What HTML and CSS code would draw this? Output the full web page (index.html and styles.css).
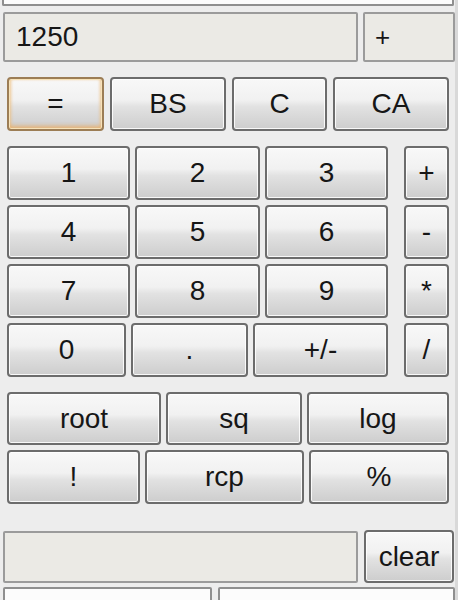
FILE: index.html
```html
<!DOCTYPE html>
<html lang="en">
<head>
<meta charset="utf-8">
<title>Calculator</title>
<link rel="stylesheet" href="styles.css">
</head>
<body>
<div class="window">
  <div class="field field-top"></div>

  <div class="display-row">
    <div class="display value">1250</div>
    <div class="display operator">+</div>
  </div>

  <div class="row ctrl">
    <button class="btn default">=</button>
    <button class="btn">BS</button>
    <button class="btn">C</button>
    <button class="btn">CA</button>
  </div>

  <div class="keypad">
    <div class="digits">
      <div class="row digit-row">
        <button class="btn">1</button>
        <button class="btn">2</button>
        <button class="btn">3</button>
      </div>
      <div class="row digit-row">
        <button class="btn">4</button>
        <button class="btn">5</button>
        <button class="btn">6</button>
      </div>
      <div class="row digit-row">
        <button class="btn">7</button>
        <button class="btn">8</button>
        <button class="btn">9</button>
      </div>
      <div class="row digit-row last">
        <button class="btn">0</button>
        <button class="btn">.</button>
        <button class="btn">+/-</button>
      </div>
    </div>
    <div class="ops">
      <button class="btn">+</button>
      <button class="btn">-</button>
      <button class="btn">*</button>
      <button class="btn">/</button>
    </div>
  </div>

  <div class="sci">
    <div class="row sci-a">
      <button class="btn">root</button>
      <button class="btn">sq</button>
      <button class="btn">log</button>
    </div>
    <div class="row sci-b">
      <button class="btn">!</button>
      <button class="btn">rcp</button>
      <button class="btn">%</button>
    </div>
  </div>

  <div class="memo-row">
    <div class="display memo"></div>
    <button class="btn clear">clear</button>
  </div>

  <div class="field-row">
    <div class="field"></div>
    <div class="field"></div>
  </div>
</div>
</body>
</html>
```

FILE: styles.css
```css
* {
  box-sizing: border-box;
}

html, body {
  margin: 0;
  padding: 0;
  height: 100%;
  overflow: hidden;
  background: #ededed;
}

body {
  font-family: "Liberation Sans", Arial, sans-serif;
  color: #161616;
}

.window {
  width: 458px;
  height: 600px;
  border-right: 3px solid #d9d9d9;
  background: #ededed;
}

/* white text fields */
.field {
  background: #fcfcfc;
  border: 2px solid #8f8f8f;
  border-radius: 2px;
}

.field-top {
  margin-left: 2px;
  width: 452px;
  height: 6px;
  border-top: none;
  border-radius: 0 0 2px 2px;
}

/* read-only displays */
.display {
  background: #ebeae5;
  border: 2px solid #9b9b9b;
  border-radius: 2px;
  font-size: 28px;
  display: flex;
  align-items: center;
}

.display-row {
  display: flex;
  gap: 5px;
  margin: 6px 0 0 3px;
  height: 50px;
}

.value {
  width: 355px;
  padding-left: 11px;
}

.operator {
  width: 92px;
  padding-left: 10px;
  font-size: 26px;
}

/* push buttons */
.btn {
  font-family: inherit;
  font-size: 28px;
  color: #161616;
  margin: 0;
  padding: 0;
  height: 100%;
  border: 2px solid #6c6c6c;
  border-radius: 4px;
  background: linear-gradient(to bottom, #f8f8f8 0%, #f1f1f1 42%, #e2e2e2 55%, #cdcdcd 100%);
  box-shadow: inset 0 0 0 1px rgba(255, 255, 255, 0.85);
  display: flex;
  align-items: center;
  justify-content: center;
  line-height: 1;
}

.btn.default {
  border-color: #9c7d55;
  box-shadow: inset 0 0 0 1px #f7e2b8, inset 0 -3px 4px rgba(236, 170, 90, 0.75), inset 2px 0 3px rgba(240, 200, 140, 0.6), inset -2px 0 3px rgba(240, 200, 140, 0.6);
}

.row {
  display: grid;
  gap: 5px;
}

.ctrl {
  margin: 15px 0 0 7px;
  height: 54px;
  grid-template-columns: 97px 116px 95px 116px;
  gap: 6px;
}

.keypad {
  display: flex;
  margin: 15px 0 0 7px;
  gap: 16px;
}

.digits,
.ops {
  display: flex;
  flex-direction: column;
  gap: 5px;
}

.digit-row {
  height: 54px;
  grid-template-columns: 123px 125px 123px;
}

.digit-row.last {
  grid-template-columns: 119px 117px 135px;
}

.ops .btn {
  width: 45px;
  height: 54px;
}

.sci {
  display: flex;
  flex-direction: column;
  gap: 5px;
  margin: 15px 0 0 7px;
}

.sci-a {
  height: 53px;
  grid-template-columns: 154px 136px 142px;
}

.sci-b {
  height: 54px;
  grid-template-columns: 133px 159px 140px;
}

.memo-row {
  display: flex;
  gap: 6px;
  margin: 26px 0 0 3px;
  height: 53px;
}

.memo {
  width: 355px;
  height: 52px;
  margin-top: 1px;
}

.clear {
  width: 90px;
  height: 53px;
}

.field-row {
  display: flex;
  gap: 6px;
  margin: 4px 0 0 3px;
}

.field-row .field {
  height: 40px;
}

.field-row .field:first-child {
  width: 209px;
}

.field-row .field:last-child {
  width: 237px;
}
```
